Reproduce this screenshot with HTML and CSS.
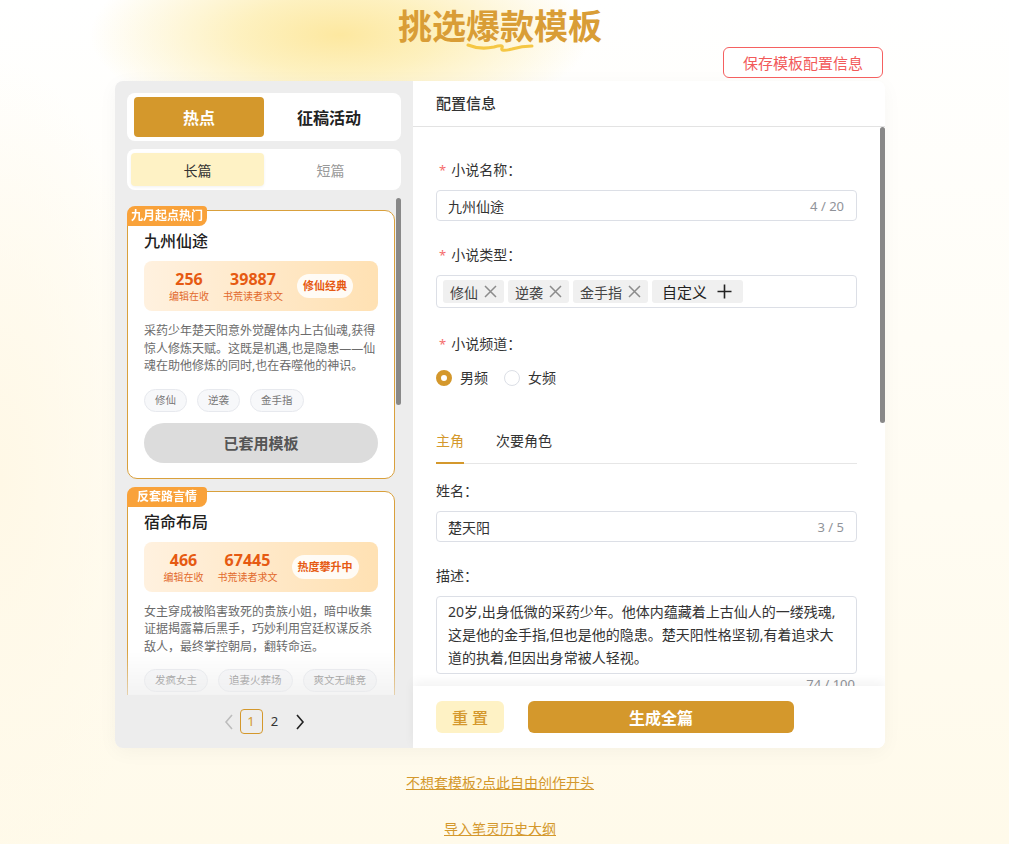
FILE: index.html
```html
<!DOCTYPE html>
<html lang="zh-CN">
<head>
    <meta charset="UTF-8">
    <meta name="viewport" content="width=device-width, initial-scale=1.0">
    <title>挑选爆款模板</title>
    <link rel="stylesheet" href="styles.css">
</head>
<body>
<div class="page">
    <div class="hero">
        <h1 class="hero-title">挑选爆款模板</h1>
        <svg class="hero-wave" width="70" height="12" viewBox="0 0 70 12">
            <path d="M2 4 Q 14 9 28 6 Q 38 3 36 7 Q 34 11 46 8 Q 56 5 66 5" fill="none" stroke="#f5c744" stroke-width="3" stroke-linecap="round"/>
        </svg>
    </div>

    <div class="toolbar">
        <button class="btn-save">保存模板配置信息</button>
    </div>

    <div class="panel">
        <!-- 左侧模板列表 -->
        <aside class="side">
            <div class="seg seg-main">
                <div class="seg-item active">热点</div>
                <div class="seg-item">征稿活动</div>
            </div>
            <div class="seg seg-sub">
                <div class="seg-item active">长篇</div>
                <div class="seg-item">短篇</div>
            </div>

            <div class="list-wrap">
                <div class="card-list">
                    <div class="tpl-card">
                        <span class="tpl-badge">九月起点热门</span>
                        <div class="tpl-name">九州仙途</div>
                        <div class="tpl-stats">
                            <div class="stat"><b>256</b><span>编辑在收</span></div>
                            <div class="stat"><b>39887</b><span>书荒读者求文</span></div>
                            <span class="stat-pill">修仙经典</span>
                        </div>
                        <p class="tpl-desc">采药少年楚天阳意外觉醒体内上古仙魂,获得惊人修炼天赋。这既是机遇,也是隐患——仙魂在助他修炼的同时,也在吞噬他的神识。</p>
                        <div class="tpl-tags"><span>修仙</span><span>逆袭</span><span>金手指</span></div>
                        <button class="tpl-btn used">已套用模板</button>
                    </div>

                    <div class="tpl-card">
                        <span class="tpl-badge">反套路言情</span>
                        <div class="tpl-name">宿命布局</div>
                        <div class="tpl-stats">
                            <div class="stat"><b>466</b><span>编辑在收</span></div>
                            <div class="stat"><b>67445</b><span>书荒读者求文</span></div>
                            <span class="stat-pill">热度攀升中</span>
                        </div>
                        <p class="tpl-desc">女主穿成被陷害致死的贵族小姐，暗中收集证据揭露幕后黑手，巧妙利用宫廷权谋反杀敌人，最终掌控朝局，翻转命运。</p>
                        <div class="tpl-tags"><span>发疯女主</span><span>追妻火葬场</span><span>爽文无雌竞</span></div>
                        <button class="tpl-btn">套用模板</button>
                    </div>

                    <div class="tpl-card">
                        <span class="tpl-badge">都市爆款</span>
                        <div class="tpl-name">重回巅峰</div>
                        <div class="tpl-stats">
                            <div class="stat"><b>312</b><span>编辑在收</span></div>
                            <div class="stat"><b>52108</b><span>书荒读者求文</span></div>
                            <span class="stat-pill">都市热门</span>
                        </div>
                        <p class="tpl-desc">被背叛的商界天才重生回到十年前，凭借前世记忆抢占先机，一步步夺回属于自己的一切。</p>
                        <div class="tpl-tags"><span>重生</span><span>商战</span><span>打脸</span></div>
                        <button class="tpl-btn">套用模板</button>
                    </div>
                </div>
                <span class="scroll-thumb thumb-list"></span>
            </div>

            <div class="pager">
                <svg class="pager-prev" width="10" height="16" viewBox="0 0 10 16"><path d="M8 1 L2 8 L8 15" fill="none" stroke="#bdbdbd" stroke-width="1.6"/></svg>
                <span class="pager-num current">1</span>
                <span class="pager-num">2</span>
                <svg class="pager-next" width="10" height="16" viewBox="0 0 10 16"><path d="M2 1 L8 8 L2 15" fill="none" stroke="#222" stroke-width="1.6"/></svg>
            </div>
        </aside>

        <!-- 右侧配置信息 -->
        <section class="config">
            <div class="config-head">配置信息</div>
            <div class="config-body">
                <div class="field">
                    <div class="field-label"><i>*</i>小说名称：</div>
                    <div class="input"><span>九州仙途</span><em>4 / 20</em></div>
                </div>

                <div class="field">
                    <div class="field-label"><i>*</i>小说类型：</div>
                    <div class="tag-box">
                        <span class="tag">修仙<svg width="15" height="15" viewBox="0 0 15 15"><path d="M2 2 L13 13 M13 2 L2 13" stroke="#8c8c8c" stroke-width="1.5"/></svg></span>
                        <span class="tag">逆袭<svg width="15" height="15" viewBox="0 0 15 15"><path d="M2 2 L13 13 M13 2 L2 13" stroke="#8c8c8c" stroke-width="1.5"/></svg></span>
                        <span class="tag">金手指<svg width="15" height="15" viewBox="0 0 15 15"><path d="M2 2 L13 13 M13 2 L2 13" stroke="#8c8c8c" stroke-width="1.5"/></svg></span>
                        <span class="tag tag-add">自定义<svg width="15" height="15" viewBox="0 0 15 15"><path d="M7.5 0.5 L7.5 14.5 M0.5 7.5 L14.5 7.5" stroke="#222" stroke-width="1.6"/></svg></span>
                    </div>
                </div>

                <div class="field field-channel">
                    <div class="field-label"><i>*</i>小说频道：</div>
                    <div class="radio-group">
                        <label class="radio checked"><span class="radio-dot"></span>男频</label>
                        <label class="radio"><span class="radio-dot"></span>女频</label>
                    </div>
                </div>

                <div class="role-tabs">
                    <span class="role-tab active">主角</span>
                    <span class="role-tab">次要角色</span>
                </div>

                <div class="field">
                    <div class="field-label">姓名：</div>
                    <div class="input"><span>楚天阳</span><em>3 / 5</em></div>
                </div>

                <div class="field">
                    <div class="field-label">描述：</div>
                    <div class="textarea">20岁,出身低微的采药少年。他体内蕴藏着上古仙人的一缕残魂,这是他的金手指,但也是他的隐患。楚天阳性格坚韧,有着追求大道的执着,但因出身常被人轻视。</div>
                    <div class="count">74 / 100</div>
                </div>

                <div class="field">
                    <div class="field-label">性格特点：</div>
                    <div class="textarea">坚韧隐忍，心思缜密，对亲近之人重情重义，对敌人则果断狠辣。</div>
                    <div class="count">29 / 100</div>
                </div>

                <div class="field">
                    <div class="field-label">核心目标：</div>
                    <div class="textarea">摆脱仙魂的控制，踏上修仙大道，查明自己身世之谜。</div>
                    <div class="count">24 / 100</div>
                </div>
            </div>
            <span class="scroll-thumb thumb-config"></span>
            <div class="config-foot">
                <button class="btn-reset">重 置</button>
                <button class="btn-generate">生成全篇</button>
            </div>
        </section>
    </div>

    <div class="links">
        <a href="#">不想套模板?点此自由创作开头</a>
        <a href="#">导入笔灵历史大纲</a>
    </div>
</div>
</body>
</html>
```

FILE: styles.css
```css
* {
    box-sizing: border-box;
}

body {
    margin: 0;
    min-height: 844px;
    font-family: "Noto Sans", "Noto Sans CJK SC", sans-serif;
    color: #333;
    background:
        radial-gradient(ellipse 250px 95px at 340px 35px, #fde8a0 0%, rgba(253, 236, 170, 0.75) 40%, rgba(255, 246, 210, 0) 100%),
        radial-gradient(ellipse 160px 420px at 0px 480px, #fff8e6 0%, rgba(255, 250, 235, 0) 100%),
        linear-gradient(180deg, #ffffff 0%, #fffdf6 40%, #fffaea 100%);
}

button {
    font-family: inherit;
    cursor: pointer;
}

.page {
    width: 1000px;
}

/* 顶部标题 */
.hero {
    position: relative;
    text-align: center;
}

.hero-title {
    margin: 0;
    padding-top: 5px;
    line-height: 42px;
    font-size: 34px;
    font-weight: 700;
    color: #d99d36;
}

.hero-wave {
    position: absolute;
    left: 466px;
    top: 41px;
}

.toolbar {
    width: 770px;
    margin-left: 115px;
    display: flex;
    justify-content: flex-end;
    padding-right: 2px;
}

.btn-save {
    width: 160px;
    height: 31px;
    background: #fff;
    border: 1px solid #f56060;
    border-radius: 6px;
    color: #f25a5a;
    font-size: 15px;
    padding: 0;
}

/* 主面板 */
.panel {
    width: 770px;
    height: 667px;
    margin: 3px 0 0 115px;
    display: flex;
    border-radius: 8px;
    overflow: hidden;
    box-shadow: 0 4px 20px rgba(0, 0, 0, 0.04);
}

.side {
    width: 298px;
    background: #ededed;
    padding: 12px 12px 0 12px;
    display: flex;
    flex-direction: column;
}

.seg {
    background: #fff;
    border-radius: 8px;
    display: grid;
    grid-template-columns: 1fr 1fr;
}

.seg-main {
    height: 48px;
    padding: 4px 7px;
}

.seg-main .seg-item {
    display: flex;
    align-items: center;
    justify-content: center;
    font-size: 16px;
    font-weight: 700;
    color: #222;
    border-radius: 4px;
}

.seg-main .seg-item.active {
    background: #d4982c;
    color: #fff;
}

.seg-sub {
    height: 41px;
    margin-top: 8px;
    padding: 4px;
}

.seg-sub .seg-item {
    display: flex;
    align-items: center;
    justify-content: center;
    font-size: 14px;
    color: #999;
    border-radius: 4px;
}

.seg-sub .seg-item.active {
    background: #fef2c5;
    color: #333;
    box-shadow: 0 1px 3px rgba(0, 0, 0, 0.06);
}

.list-wrap {
    flex: 1;
    min-height: 0;
    margin-top: 8px;
    position: relative;
}

.card-list {
    height: 100%;
    margin-right: 6px;
    padding-top: 12px;
    overflow: hidden;
    -webkit-mask-image: linear-gradient(180deg, #000 0, #000 calc(100% - 45px), rgba(0, 0, 0, 0.35) 100%);
}

.scroll-thumb {
    position: absolute;
    right: 0;
    width: 5px;
    background: #888;
    border-radius: 3px;
}

.thumb-list {
    top: 0;
    height: 207px;
}

.thumb-config {
    top: 46px;
    height: 296px;
}

.tpl-card {
    position: relative;
    background: #fff;
    border: 1px solid #d9a03c;
    border-radius: 10px;
    padding: 19px 16px 15px 16px;
    margin-bottom: 12px;
}

.tpl-badge {
    position: absolute;
    left: -1px;
    top: -5px;
    width: 80px;
    height: 20px;
    line-height: 20px;
    text-align: center;
    background: #f9a23a;
    color: #fff;
    font-size: 12px;
    font-weight: 700;
    border-radius: 8px 4px 8px 0;
}

.tpl-name {
    font-size: 16px;
    line-height: 22px;
    font-weight: 500;
    color: #222;
}

.tpl-stats {
    margin-top: 9px;
    height: 50px;
    border-radius: 8px;
    background: linear-gradient(90deg, #fff1df 0%, #ffe7c4 60%, #ffe1b3 100%);
    display: flex;
    align-items: center;
    justify-content: center;
    gap: 14px;
}

.stat {
    display: flex;
    flex-direction: column;
    align-items: center;
}

.stat b {
    font-size: 16px;
    line-height: 20px;
    color: #e65a12;
    font-weight: 700;
}

.stat span {
    font-size: 10px;
    line-height: 14px;
    color: #e2692c;
}

.stat-pill {
    background: rgba(255, 255, 255, 0.85);
    border-radius: 12px;
    height: 24px;
    line-height: 24px;
    padding: 0 6px;
    font-size: 11px;
    font-weight: 700;
    color: #e65a12;
}

.tpl-desc {
    margin: 11px 0 0;
    font-size: 12px;
    line-height: 17.5px;
    color: #6b6b6b;
}

.tpl-tags {
    margin-top: 14px;
    display: flex;
    gap: 10px;
    white-space: nowrap;
}

.tpl-tags span {
    height: 23px;
    line-height: 21px;
    padding: 0 10px;
    border: 1px solid #e7e9ee;
    background: #f7f8fa;
    border-radius: 12px;
    font-size: 10.5px;
    color: #777;
}

.tpl-btn {
    margin-top: 11px;
    width: 100%;
    height: 40px;
    border: none;
    border-radius: 20px;
    background: #d4982c;
    color: #fff;
    font-size: 15px;
    font-weight: 700;
}

.tpl-btn.used {
    background: #dcdcdc;
    color: #555;
}

.pager {
    height: 53px;
    flex-shrink: 0;
    display: flex;
    align-items: center;
    justify-content: center;
}

.pager-prev {
    margin-right: 6px;
}

.pager-next {
    margin-left: 8px;
}

.pager-num {
    width: 24px;
    height: 25px;
    line-height: 23px;
    text-align: center;
    font-size: 13px;
    color: #333;
    border: 1px solid transparent;
    border-radius: 4px;
}

.pager-num.current {
    width: 23px;
    border-color: #d4982c;
    color: #d4982c;
}

/* 右侧配置 */
.config {
    flex: 1;
    background: #fff;
    display: flex;
    flex-direction: column;
    min-width: 0;
    position: relative;
}

.config-head {
    height: 46px;
    flex-shrink: 0;
    padding-left: 23px;
    line-height: 45px;
    font-size: 15px;
    font-weight: 500;
    color: #333;
    border-bottom: 1px solid #e3e3e3;
}

.config-body {
    flex: 1;
    overflow: hidden;
    padding: 33px 28px 30px 23px;
}

.field {
    margin-bottom: 24px;
}

.field-channel {
    padding-top: 2px;
}

.field-label {
    font-size: 14px;
    line-height: 20px;
    color: #333;
    margin-bottom: 10px;
}

.field-label i {
    font-style: normal;
    color: #f56c6c;
    margin: 0 5px 0 3px;
    font-size: 13px;
}

.input {
    height: 31px;
    border: 1px solid #dcdfe6;
    border-radius: 4px;
    padding: 0 12px 0 11px;
    display: flex;
    align-items: center;
    justify-content: space-between;
    font-size: 14px;
    color: #333;
}

.input em,
.count {
    font-style: normal;
    font-size: 13px;
    color: #909399;
}

.tag-box {
    height: 33px;
    border: 1px solid #dcdfe6;
    border-radius: 4px;
    padding: 0 6px;
    display: flex;
    align-items: center;
    gap: 4px;
}

.tag {
    height: 23px;
    background: #f0f0f0;
    border-radius: 3px;
    padding: 0 6px 0 7px;
    display: flex;
    align-items: center;
    gap: 5px;
    font-size: 14px;
    color: #444;
}

.tag-add {
    padding: 0 11px 0 10px;
    gap: 10px;
    font-size: 15px;
    color: #222;
}

.radio-group {
    display: flex;
    gap: 16px;
    padding-top: 4px;
}

.radio {
    display: flex;
    align-items: center;
    gap: 8px;
    font-size: 14px;
    line-height: 20px;
    color: #333;
}

.radio-dot {
    width: 16px;
    height: 16px;
    border-radius: 50%;
    border: 1px solid #dcdfe6;
    background: #fff;
}

.radio.checked .radio-dot {
    border: 5px solid #d4982c;
}

.role-tabs {
    margin-top: 43px;
    display: flex;
    gap: 32px;
    border-bottom: 1px solid #e6e6e6;
}

.role-tab {
    font-size: 14px;
    line-height: 20px;
    padding-bottom: 11px;
    color: #333;
    border-bottom: 2px solid transparent;
    margin-bottom: -1px;
}

.role-tab.active {
    color: #d4982c;
    border-bottom-color: #d4982c;
}

.role-tabs + .field {
    margin-top: 17px;
}

.textarea {
    min-height: 75px;
    border: 1px solid #dcdfe6;
    border-radius: 4px;
    padding: 3px 11px 4px;
    font-size: 14px;
    line-height: 23px;
    color: #333;
}

.count {
    text-align: right;
    line-height: 20px;
    padding-right: 2px;
}

.config-foot {
    height: 62px;
    flex-shrink: 0;
    display: flex;
    align-items: center;
    gap: 24px;
    padding: 0 23px;
    background: #fff;
    box-shadow: 0 -4px 10px rgba(0, 0, 0, 0.05);
    position: relative;
}

.btn-reset {
    width: 68px;
    height: 32px;
    border: none;
    border-radius: 6px;
    background: #fef2c5;
    color: #d4982c;
    font-size: 16px;
    font-weight: 500;
}

.btn-generate {
    width: 266px;
    height: 32px;
    border: none;
    border-radius: 6px;
    background: #d4982c;
    color: #fff;
    font-size: 16px;
    font-weight: 700;
}

/* 底部链接 */
.links {
    display: flex;
    flex-direction: column;
    align-items: center;
    gap: 26px;
    margin-top: 25px;
}

.links a {
    font-size: 14px;
    line-height: 20px;
    color: #d4982c;
    text-decoration: underline;
}
```
